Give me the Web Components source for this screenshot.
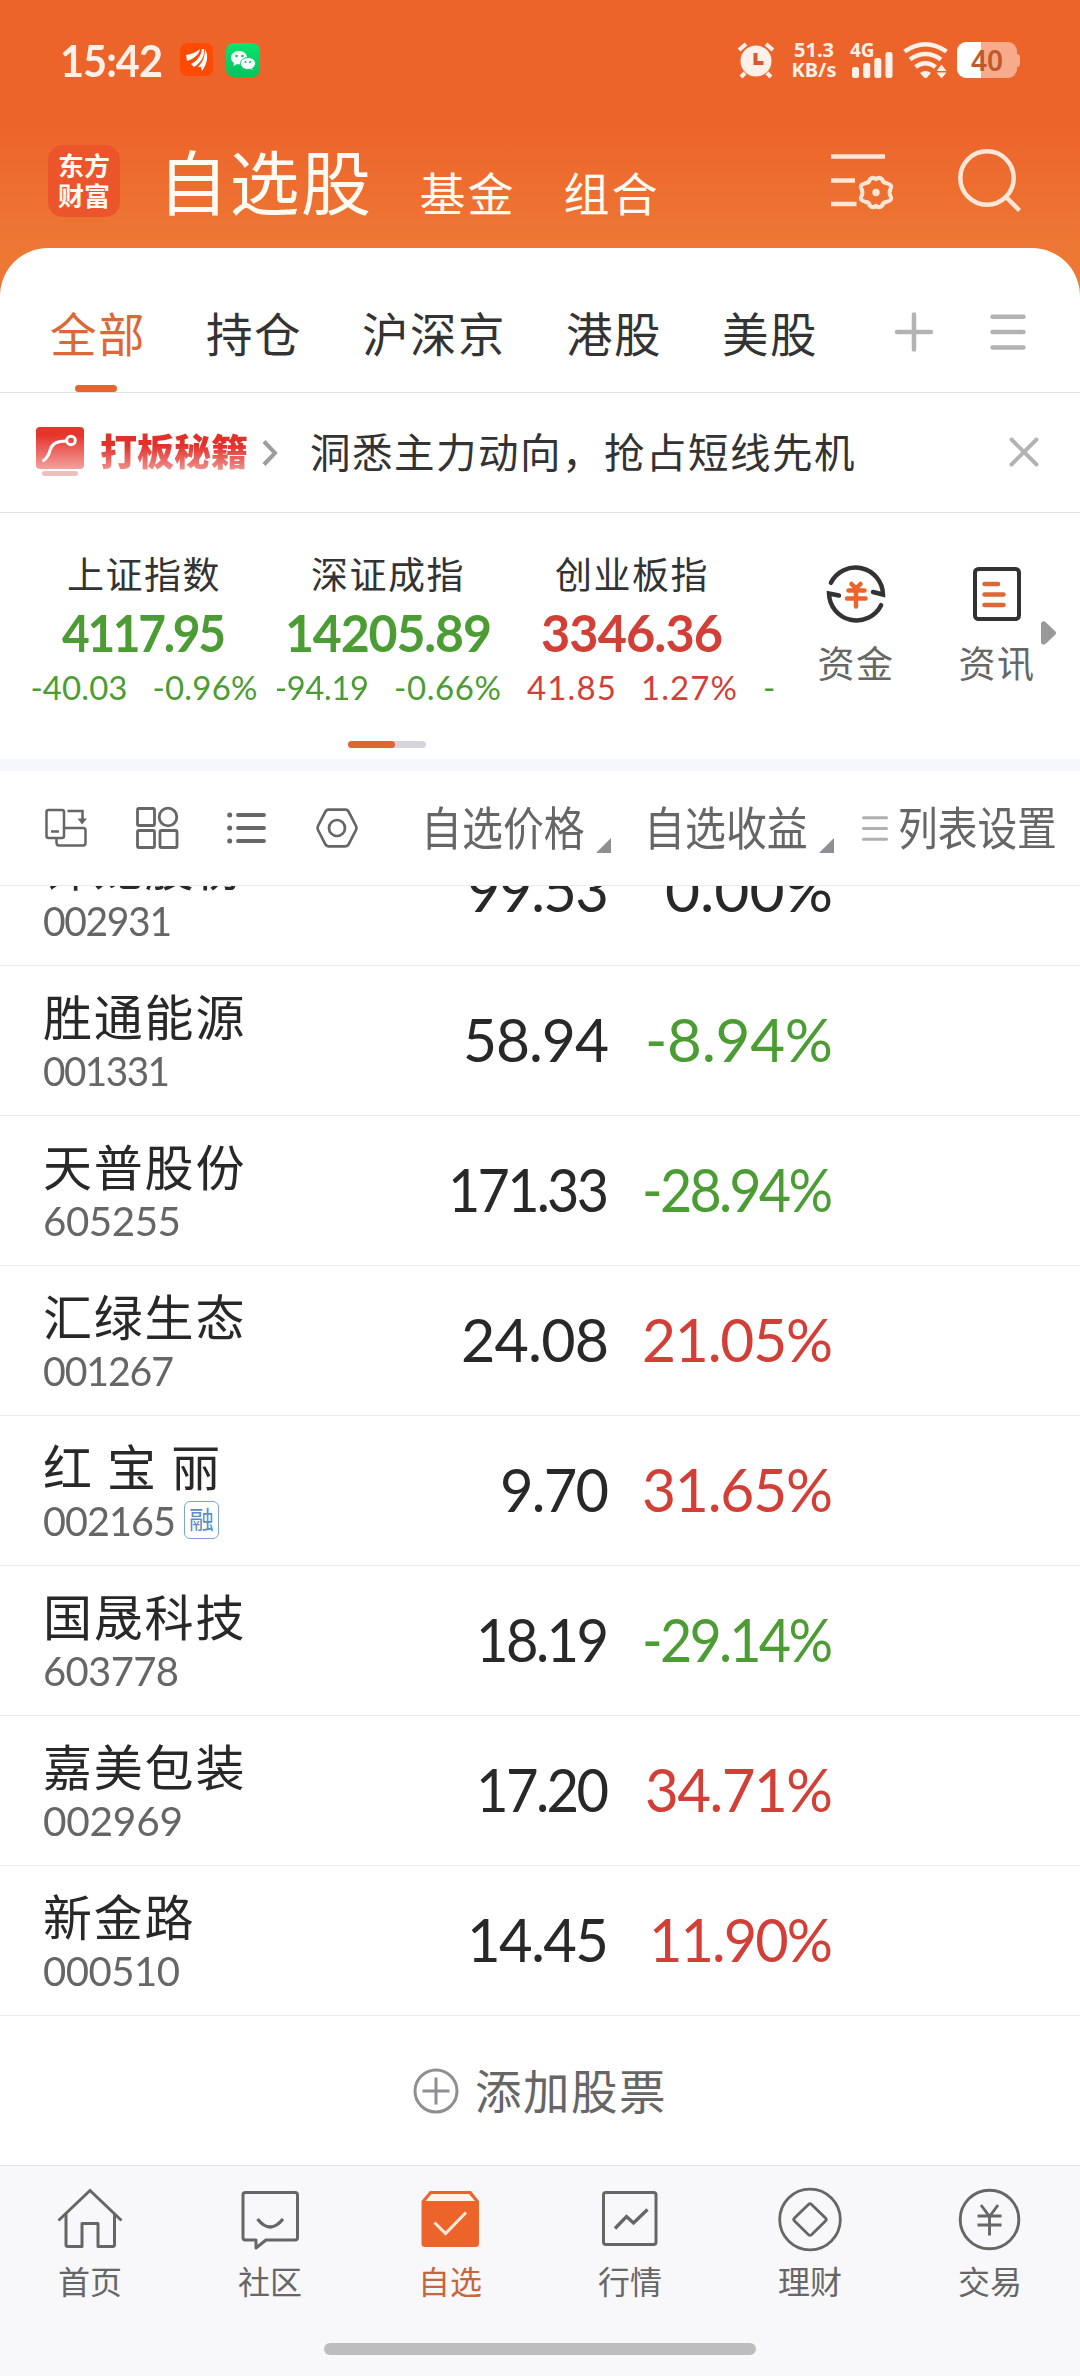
<!DOCTYPE html>
<html lang="zh-CN">
<head>
<meta charset="utf-8">
<title>自选股</title>
<style>
    html, body { margin: 0; padding: 0; }
    body {
        width: 1080px;
        height: 2376px;
        overflow: hidden;
        background: #fff;
        font-family: "Noto Sans CJK SC", sans-serif;
        --orange: #ed642b;
        --up: #d23f37;
        --down: #4c9c34;
        --line: #e4e4e4;
        --num: Lato, "Noto Sans CJK SC", sans-serif;
    }
</style>
</head>
<body>
<watch-page></watch-page>

<script>
// every element gets an open shadow root filled from a template
let define = (name, html, setup) => {
    let template = document.createElement("template");
    template.innerHTML = "<style>*{box-sizing:border-box}:host{display:block;box-sizing:border-box}</style>" + html;
    customElements.define(name, class extends HTMLElement {
        connectedCallback() {
            if (this.shadowRoot) return;
            this.attachShadow({ mode: "open" }).append(template.content.cloneNode(true));
            setup && setup(this, this.shadowRoot);
        }
    });
};

// name: [width, height, markup]
let icons = {
    leaf: [33, 33, `<rect width="33" height="33" rx="7" fill="#ff4a05"/><g fill="#fff"><path d="M6 12C12 11 17 9 20 6C19 12 13 16 7 18Z"/><path d="M11 21C17 18 21 13 22 6L24 6C25 14 20 20 14 24Z"/><path d="M18 24C23 19 25 13 25 6C29 13 27 21 22 28L21 24Z"/></g>`],
    wechat: [34, 34, `<defs><linearGradient id="g" x2="0" y2="1"><stop stop-color="#05e56d"/><stop offset="1" stop-color="#09c160"/></linearGradient></defs><rect width="34" height="34" rx="8" fill="url(#g)"/><path d="M13 8c-5 0-8 3-8 6.600c0 2.400 1.200 4.200 3 5.400l-.5 3l3-1.800h2.500c5 0 8-3 8-6.600S18 8 13 8Z" fill="#fff"/><path d="M22 14.500c-4.500 0-7.500 2.700-7.500 6s3 6 7.500 6l2.500-.3l2.500 1.500l-.4-2.600c1.600-1 2.900-2.600 2.900-4.600c0-3.300-3-6-7.500-6Z" fill="#fff" stroke="#08cc62"/><g fill="#08cc62"><circle cx="10.500" cy="13" r="1.300"/><circle cx="16.500" cy="13" r="1.300"/><circle cx="19.500" cy="19" r="1.100"/><circle cx="24" cy="19" r="1.100"/></g>`],
    alarm: [36, 36, `<g stroke="#fff1ea" stroke-width="4" fill="none"><path d="M1 8L8 2M35 8L28 2M7 31L3 35M29 31L33 35"/></g><circle cx="18" cy="19" r="15.500" fill="#fff1ea"/><path d="M17.500 11v10h8" fill="none" stroke="#d9592a" stroke-width="4"/>`],
    signal: [41, 26, `<g fill="#fff1ea"><rect y="15" width="7" height="11" rx="2.500"/><rect x="11.200" y="11" width="7" height="15" rx="2.500"/><rect x="22.300" y="6" width="7" height="20" rx="2.500"/><rect x="33.500" width="7" height="26" rx="2.500"/></g>`],
    wifi: [46, 36, `<g fill="none" stroke="#fff1ea" stroke-width="4.500"><path d="M1.500 9.500Q22.500-5 43.500 9.500"/><path d="M7 17.500Q22.500 6.500 38 17.500"/><path d="M12.500 25Q22.500 17.500 32.500 25"/></g><path d="M17 31q5.500-4 11 0l-4 4.500q-1.500 1-3 0ZM33.500 29l5-6.500l5 6.500ZM33.500 30.500h10l-5 6Z" fill="#fff1ea"/>`],
    filter: [64, 58, `<g fill="none" stroke="#ffe6d6"><path d="M0 9.500H54M0 33.500H24M0 57H25.500" stroke-width="4.500"/><path d="M38.800 32.400Q41.500 29.500 45 32Q48.500 29.500 51.200 32.400Q51.700 36 56 36.300Q62 38 59.500 42Q57.500 45.500 59.500 49Q62 53 56 54.700Q51.700 55 51.200 58.600Q48.500 61.500 45 59Q41.500 61.500 38.800 58.600Q38.300 55 34 54.700Q28 53 30.500 49Q32.500 45.500 30.500 42Q28 38 34 36.300Q38.300 36 38.800 32.400Z" stroke-width="4"/></g><circle cx="45" cy="45.500" r="3.700" fill="#ffe6d6"/>`],
    search: [64, 64, `<g fill="none" stroke="#ffe6d6" stroke-width="4.500"><circle cx="29" cy="29" r="26.700"/><path d="M47.500 47.500L61.500 61.500"/></g>`],
    plus: [40, 40, `<path d="M3 20H37M20 2.500V37.500" stroke="#b3b3b3" stroke-width="4.500" stroke-linecap="round"/>`],
    menu: [36, 36, `<path d="M2.500 2.700H33.500M2.500 18H33.500M2.500 33.500H33.500" stroke="#b3b3b3" stroke-width="4.500" stroke-linecap="round"/>`],
    promo: [48, 50, `<defs><linearGradient id="g" x2="0" y2="1"><stop offset=".2" stop-color="#e6352c"/><stop offset="1" stop-color="#f3a19d"/></linearGradient></defs><rect width="48" height="42" rx="4" fill="url(#g)"/><rect x="6" y="44" width="36" height="5" rx="2.500" fill="#f0bfbd"/><g fill="none" stroke="#fff" stroke-width="3"><path d="M7.500 33.500Q12 31 14.500 22Q17 14 30 14" stroke-linecap="round"/><circle cx="35" cy="13.500" r="4.300"/></g>`],
    chevron: [16, 28, `<path d="M2 2.500L13 14L2 25.500" fill="none" stroke="#9c9c9c" stroke-width="4"/>`],
    close: [30, 30, `<path d="M2.500 2.500L27.500 27.500M27.500 2.500L2.500 27.500" stroke="#b3b3b3" stroke-width="4" stroke-linecap="round"/>`],
    funds: [60, 60, `<path d="M4.900 18.800A27.500 27.500 0 0 1 57 30.500L47 28M55.100 41.200A27.500 27.500 0 0 1 3 29.500L13 31.500" fill="none" stroke="#333" stroke-width="4.500" stroke-linecap="round"/><path d="M25.500 20L30 24.500L34.500 20M22.500 26.500H38.500M21 34.500H39.500M30 25V42.500" stroke="#ed642b" stroke-width="4.500" stroke-linecap="round" fill="none"/>`],
    news: [48, 60, `<rect x="2" y="5" width="44" height="50" rx="3.500" fill="none" stroke="#333" stroke-width="4"/><path d="M11.500 20H25M11.500 30.500H30.500M11.500 41H30.500" stroke="#dc6838" stroke-width="4.500" stroke-linecap="round"/>`],
    more: [15, 24, `<path d="M0 2Q2-1 5 1.500L14 10Q16 12 14 14L5 22.500Q2 25 0 22Z" fill="#999"/>`],
    rotate: [42, 40, `<g fill="none" stroke="#666" stroke-width="2.500"><rect x="1.500" y="2" width="17.500" height="28" rx="2"/><path d="M11.500 30.500V34.500Q11.500 37.500 14 37.500H38Q40.500 37.500 40.500 35V22.500Q40.500 20 38 20H19M22.500 3H37.500V13"/><path d="M6 23.500H14"/></g><path d="M32.500 10.500H42L37 16.500Z" fill="#666"/>`],
    grid: [42, 42, `<g fill="none" stroke="#666" stroke-width="2.800"><rect x="1.500" y="1.500" width="17" height="17" rx="1.500"/><circle cx="32" cy="10" r="8.800"/><rect x="1.500" y="23.500" width="17" height="17" rx="1.500"/><rect x="24" y="23.500" width="17" height="17" rx="1.500"/></g>`],
    list: [40, 32, `<path d="M11 3H37M11 16H37M11 29H37" stroke="#666" stroke-width="3.800" stroke-linecap="round"/><g fill="#666"><circle cx="2.700" cy="3" r="2.500"/><circle cx="2.700" cy="16" r="2.500"/><circle cx="2.700" cy="29" r="2.500"/></g>`],
    hex: [42, 40, `<g fill="none" stroke="#666" stroke-width="2.700"><path d="M12.500 1.700H29.500Q31.500 1.700 32.500 3.500L40 18Q41 20 40 22L32.500 36.500Q31.500 38.300 29.500 38.300H12.500Q10.500 38.300 9.500 36.500L2 22Q1 20 2 18L9.500 3.500Q10.500 1.700 12.500 1.700Z"/><circle cx="21" cy="20" r="8"/></g>`],
    corner: [15, 15, `<path d="M15 0V15H0Z" fill="#8e8e93"/>`],
    lines: [26, 25, `<path d="M1.500 1.800H24.500M1.500 12.500H24.500M1.500 23.200H24.500" stroke="#b0b0b0" stroke-width="3" stroke-linecap="round"/>`],
    add: [46, 46, `<g fill="none" stroke="#8e8e93" stroke-width="3"><circle cx="23" cy="23" r="21"/><path d="M9.500 23H36.500M23 9.500V36.500"/></g>`],
    home: [66, 66, `<g fill="none" stroke="#666" stroke-width="3"><path d="M1.500 34.500L33 4.500L64.500 34.500"/><path d="M9 28V58.500Q9 60.500 11 60.500H25V37.500H41V60.500H55.500Q57.500 60.500 57.500 58.500V28" stroke-linejoin="round"/></g>`],
    chat: [66, 66, `<g fill="none" stroke="#666" stroke-width="3" stroke-linejoin="round"><path d="M8.500 6.500H58Q60.500 6.500 60.500 9V51.500Q60.500 54 58 54H29L19 62V54H8.500Q6 54 6 51.500V9Q6 6.500 8.500 6.500Z"/><path d="M20.500 33Q33 49 46 33" stroke-width="3.300"/></g>`],
    box: [66, 66, `<path d="M4.500 15L13 5H54L62 15V57.500Q62 61 58.500 61H8Q4.500 61 4.500 57.500Z" fill="#ed642b"/><path d="M8.500 15L14.500 8H52L58 15Z" fill="#fff5ed"/><path d="M17.500 36.500L28.500 47.500L49 26.500" fill="none" stroke="#ffeadb" stroke-width="3"/>`],
    chart: [66, 66, `<g fill="none" stroke="#666" stroke-width="3"><rect x="6.500" y="6.500" width="52.500" height="52" rx="2.500"/><path d="M18 42.500L29.500 30.500L36.500 37L50.500 23.500" stroke-width="3.300"/></g>`],
    diamond: [66, 66, `<g fill="none" stroke="#666" stroke-width="2.800"><circle cx="33" cy="33.500" r="30.300"/><path d="M31.500 18.500Q33 17 34.500 18.500L48.500 32Q50 33.500 48.500 35L34.500 48.700Q33 50 31.500 48.700L17.500 35Q16 33.500 17.500 32Z"/></g>`],
    yen: [66, 66, `<g fill="none" stroke="#666" stroke-width="2.900"><circle cx="32.500" cy="33.500" r="29.300"/><path d="M24 19L32.500 30.500L41 19M20.500 30H44.500M20.500 39H44.500M32.500 30V49.500"/></g>`]
};

define("app-icon", "<style>:host{flex:none}svg{display:block;overflow:visible}</style>", (host, root) => {
    let [width, height, markup] = icons[host.getAttribute("name")];
    root.innerHTML += `<svg width="${width}" height="${height}" viewBox="0 0 ${width} ${height}">${markup}</svg>`;
});

// figures set exactly `width` pixels wide: part condensing, part tracking
define("fit-text", `<style>
    :host { display: inline-block; flex: none; white-space: nowrap; line-height: 1; font-family: var(--num); }
    span { display: inline-block; transform-origin: 0 50%; }
</style><span><slot></slot></span>`, (host, root) => {
    let span = root.querySelector("span");
    let count = host.textContent.length;
    let width = +host.getAttribute("width");
    if (count < 2 || !width) return;
    let natural = span.getBoundingClientRect().width;
    let scale = Math.min(1, Math.sqrt(width / natural));
    host.style.letterSpacing = (width / scale - natural) / (count - 1) + "px";
    host.style.width = width + "px";
    span.style.transform = `scaleX(${scale})`;
});

define("status-bar", `<style>
    :host { display: flex; align-items: center; height: 120px; padding: 0 60px; color: #fff1ea; }
    fit-text { font-weight: 700; font-size: 43px; }
    .apps { display: flex; gap: 13px; margin-left: 17px; }
    .right { display: flex; align-items: center; margin-left: auto; }
    .rate { width: 46px; margin-left: 17px; font: 700 20px/20px "Noto Sans", sans-serif; text-align: center; white-space: nowrap; }
    .rate div { height: 20px; }
    .net { position: relative; margin-left: 15px; padding-top: 10px; }
    .net b { position: absolute; left: -2px; top: -1px; font: 700 19px/19px "Noto Sans", sans-serif; }
    .wifi { margin-left: 10px; }
    .battery { width: 60px; height: 36px; margin-left: 8px; border-radius: 9px; background: linear-gradient(90deg, #fff 40%, #f7ab8b 40%); color: #c0582b; font: 600 28px/36px "Noto Sans", sans-serif; text-align: center; }
    .nub { width: 3px; height: 13px; border-radius: 0 3px 3px 0; background: #f7ab8b; }
</style>
<fit-text width="103">15:42</fit-text>
<div class="apps"><app-icon name="leaf"></app-icon><app-icon name="wechat"></app-icon></div>
<div class="right">
    <app-icon name="alarm"></app-icon>
    <div class="rate"><div>51.3</div><div>KB/s</div></div>
    <div class="net"><b>4G</b><app-icon name="signal"></app-icon></div>
    <app-icon class="wifi" name="wifi"></app-icon>
    <div class="battery">40</div><div class="nub"></div>
</div>`);

define("app-header", `<style>
    :host { display: flex; height: 128px; padding: 25px 58px 0 48px; color: #fffaf2; }
    .logo { width: 72px; height: 72px; padding-top: 5px; border-radius: 15px; background: #ec552b; font: 700 26px/30px "Noto Sans CJK SC", sans-serif; text-align: center; }
    h1 { margin: 0 0 0 38px; font-size: 70px; line-height: 69px; font-weight: 400; letter-spacing: 1.500px; }
    span { margin-top: 23px; font-size: 46px; line-height: 46px; letter-spacing: 2px; }
    .fund { margin-left: 47px; }
    .group { margin-left: 48px; }
    .filter { margin: 2px 0 0 auto; }
    .search { margin: 4px 0 0 63px; }
</style>
<div class="logo">东方<br>财富</div>
<h1>自选股</h1>
<span class="fund">基金</span><span class="group">组合</span>
<app-icon class="filter" name="filter"></app-icon>
<app-icon class="search" name="search"></app-icon>`);

define("market-tabs", `<style>
    :host { display: flex; height: 145px; padding: 0 54px 0 50px; border-bottom: 1px solid var(--line); border-radius: 48px 48px 0 0; background: #fff; color: #333; }
    .tab { flex: none; height: 144px; margin-right: 60px; padding-top: 59px; font-size: 46.500px; line-height: 50px; letter-spacing: 1.500px; white-space: nowrap; }
    .on { color: #dd6736; }
    .on::after { content: ""; display: block; width: 42px; height: 7px; margin: 28px 0 0 25px; border-radius: 3.500px; background: #e5652f; }
    .plus { margin: 64px 0 0 16px; }
    .menu { margin: 66px 0 0 auto; }
</style>
<div class="tab on">全部</div><div class="tab">持仓</div><div class="tab">沪深京</div><div class="tab">港股</div><div class="tab">美股</div>
<app-icon class="plus" name="plus"></app-icon><app-icon class="menu" name="menu"></app-icon>`);

define("promo-banner", `<style>
    :host { display: flex; align-items: center; height: 120px; padding: 0 41px 0 36px; border-bottom: 1px solid var(--line); color: #333; }
    app-icon { margin-top: -2px; }
    b { margin: -6px 0 0 16px; font-size: 37px; line-height: 48px; font-weight: 900; background: linear-gradient(#e2302a 40%, #f2a09c); -webkit-background-clip: text; color: transparent; }
    .go { margin-left: 14px; margin-top: 0; }
    p { margin: -4px auto 0 32px; font-size: 40.500px; line-height: 50px; letter-spacing: 1.500px; }
</style>
<app-icon name="promo"></app-icon><b>打板秘籍</b><app-icon class="go" name="chevron"></app-icon>
<p>洞悉主力动向，抢占短线先机</p><app-icon name="close"></app-icon>`);

define("index-cell", `<style>
    :host { width: 244px; flex: none; text-align: center; color: var(--tone); }
    .name { height: 40px; color: #333; font-size: 37px; line-height: 40px; letter-spacing: 1.500px; }
    .value { display: flex; justify-content: center; height: 52px; margin-top: 13px; font-size: 52px; font-weight: 700; }
    .change { display: flex; justify-content: center; gap: 25px; height: 33px; margin-top: 13px; font-size: 33px; }
</style>
<div class="name"><slot></slot></div><div class="value"></div><div class="change"></div>`, (host, root) => {
    let fit = text => {
        let [label, width] = text.split("/");
        return `<fit-text width="${width}">${label}</fit-text>`;
    };
    root.querySelector(".value").innerHTML = fit(host.getAttribute("value"));
    root.querySelector(".change").innerHTML = host.getAttribute("change").split(" ").map(fit).join("");
});

define("index-strip", `<style>
    :host { display: flex; height: 258px; border-bottom: 12px solid #f6f7fa; }
    .indices { width: 775px; padding: 40px 0 0 22px; overflow: hidden; }
    .cells { display: flex; height: 151px; }
    .next { margin: 118px 0 0 9px; color: var(--down); font-size: 33px; }
    .pager { width: 78px; height: 7px; margin: 37px 0 0 326px; border-radius: 4px; background: #d5d6db; }
    .pager i { display: block; width: 47px; height: 7px; border-radius: 4px; background: #de6535; }
    .link { display: flex; flex-direction: column; align-items: center; width: 80px; margin: 51px 0 0 41px; color: #666; font-size: 37px; line-height: 40px; letter-spacing: 1.500px; white-space: nowrap; }
    .link app-icon { margin-bottom: 18px; }
    .link + .link { margin-left: 61px; }
    .more { margin: 108px 0 0 4px; }
</style>
<div class="indices">
    <div class="cells">
        <index-cell value="4117.95/164" change="-40.03/97 -0.96%/105" style="--tone:var(--down)">上证指数</index-cell>
        <index-cell value="14205.89/207" change="-94.19/94 -0.66%/107" style="--tone:var(--down)">深证成指</index-cell>
        <index-cell value="3346.36/182" change="41.85/89 1.27%/96" style="--tone:var(--up)">创业板指</index-cell>
        <fit-text class="next">-</fit-text>
    </div>
    <div class="pager"><i></i></div>
</div>
<div class="link"><app-icon name="funds"></app-icon>资金</div>
<div class="link"><app-icon name="news"></app-icon>资讯</div>
<app-icon class="more" name="more"></app-icon>`);

define("tool-bar", `<style>
    :host { display: flex; align-items: center; height: 115px; padding-left: 45px; border-bottom: 1px solid #ebebeb; color: #666; }
    .tools { display: flex; align-items: center; gap: 49px; width: 376px; }
    .col { display: flex; align-items: center; }
    /* labels are set narrower than the face itself */
    .col b { width: 165px; font-weight: 400; font-size: 46px; line-height: 50px; margin-top: -7px; white-space: nowrap; transform: scaleX(.89); transform-origin: 0 50%; }
    .corner { margin: 35px 0 0 10px; }
    .two { margin-left: 33px; }
    .three { margin-left: 28px; }
    .three b { margin-left: 10px; transform: scaleX(.863); }
</style>
<div class="tools"><app-icon name="rotate"></app-icon><app-icon name="grid"></app-icon><app-icon name="list"></app-icon><app-icon name="hex"></app-icon></div>
<div class="col"><b>自选价格</b><app-icon class="corner" name="corner"></app-icon></div>
<div class="col two"><b>自选收益</b><app-icon class="corner" name="corner"></app-icon></div>
<div class="col three"><app-icon name="lines"></app-icon><b>列表设置</b></div>`);

define("stock-row", `<style>
    :host { display: flex; height: 150px; padding: 0 247px 0 43px; border-bottom: 1px solid #ebebeb; color: #282828; }
    .id { flex: 1; padding-top: 23px; }
    .name { height: 52px; font-size: 49px; line-height: 52px; letter-spacing: 1.800px; word-spacing: .500px; white-space: pre; }
    .code { display: flex; align-items: center; height: 42px; margin-top: 8px; color: #666; font-size: 41px; }
    .tag { width: 35px; height: 38px; margin-left: 8px; border: 1.500px solid #7ba4d4; border-radius: 6px; color: #5d8cc4; font-size: 25px; line-height: 33px; text-align: center; }
    .num { display: flex; justify-content: flex-end; padding-top: 43px; font-size: 60.500px; }
    .gain { width: 224px; color: var(--tone, #282828); }
</style>
<div class="id"><div class="name"><slot></slot></div><div class="code"></div></div>
<div class="num price"></div><div class="num gain"></div>`, (host, root) => {
    let attr = name => host.getAttribute(name);
    let fill = (name, text) => {
        let [label, width] = text.split("/");
        root.querySelector(name).innerHTML = `<fit-text width="${width}">${label}</fit-text>`;
    };
    fill(".code", attr("code"));
    fill(".price", attr("price"));
    fill(".gain", attr("gain"));
    if (attr("tag")) root.querySelector(".code").insertAdjacentHTML("beforeend", `<span class="tag">${attr("tag")}</span>`);
    let sign = parseFloat(attr("gain"));
    if (sign) root.querySelector(".gain").style.setProperty("--tone", sign > 0 ? "var(--up)" : "var(--down)");
});

// scrolled list: its first row is partly under the toolbar
define("stock-list", `<style>
    :host { display: flex; flex-direction: column; justify-content: flex-end; height: 1130px; overflow: hidden; }
    stock-row { flex: none; }
</style>
<stock-row code="002931/129" price="99.53/142" gain="0.00%/168">锋龙股份</stock-row>
<stock-row code="001331/127" price="58.94/146" gain="-8.94%/188">胜通能源</stock-row>
<stock-row code="605255/138" price="171.33/161" gain="-28.94%/191">天普股份</stock-row>
<stock-row code="001267/131" price="24.08/148" gain="21.05%/191">汇绿生态</stock-row>
<stock-row code="002165/133" price="9.70/109" gain="31.65%/191" tag="融">红 宝 丽</stock-row>
<stock-row code="603778/136" price="18.19/133" gain="-29.14%/191">国晟科技</stock-row>
<stock-row code="002969/140" price="17.20/133" gain="34.71%/188">嘉美包装</stock-row>
<stock-row code="000510/137" price="14.45/142" gain="11.90%/184">新金路</stock-row>`);

define("add-stock", `<style>
    :host { display: flex; align-items: center; justify-content: center; height: 150px; border-bottom: 1px solid var(--line); color: #666; font-size: 46.500px; line-height: 50px; letter-spacing: 1.500px; }
    span { margin: -4px 0 0 16px; }
</style>
<app-icon name="add"></app-icon><span>添加股票</span>`);

define("nav-item", `<style>
    :host { display: flex; flex-direction: column; align-items: center; flex: 1; color: #666; font-size: 32px; line-height: 36px; }
    :host([active]) { color: #c9653a; }
    app-icon { margin-bottom: 10px; }
</style>`, (host, root) => {
    root.innerHTML += `<app-icon name="${host.getAttribute("icon")}"></app-icon><span><slot></slot></span>`;
});

define("bottom-nav", `<style>
    :host { height: 210px; padding-top: 20px; background: #f8f8fa; }
    nav { display: flex; height: 157px; }
    i { display: block; width: 432px; height: 12px; margin: 0 auto; border-radius: 6px; background: #bdbdbd; }
</style>
<nav>
    <nav-item icon="home">首页</nav-item>
    <nav-item icon="chat">社区</nav-item>
    <nav-item icon="box" active>自选</nav-item>
    <nav-item icon="chart">行情</nav-item>
    <nav-item icon="diamond">理财</nav-item>
    <nav-item icon="yen">交易</nav-item>
</nav><i></i>`);

define("watch-page", `<style>
    .top { background: linear-gradient(#ed642b 125px, #ed7834 248px); }
</style>
<div class="top"><status-bar></status-bar><app-header></app-header><market-tabs></market-tabs></div>
<promo-banner></promo-banner>
<index-strip></index-strip>
<tool-bar></tool-bar>
<stock-list></stock-list>
<add-stock></add-stock>
<bottom-nav></bottom-nav>`);
</script>
</body>
</html>
